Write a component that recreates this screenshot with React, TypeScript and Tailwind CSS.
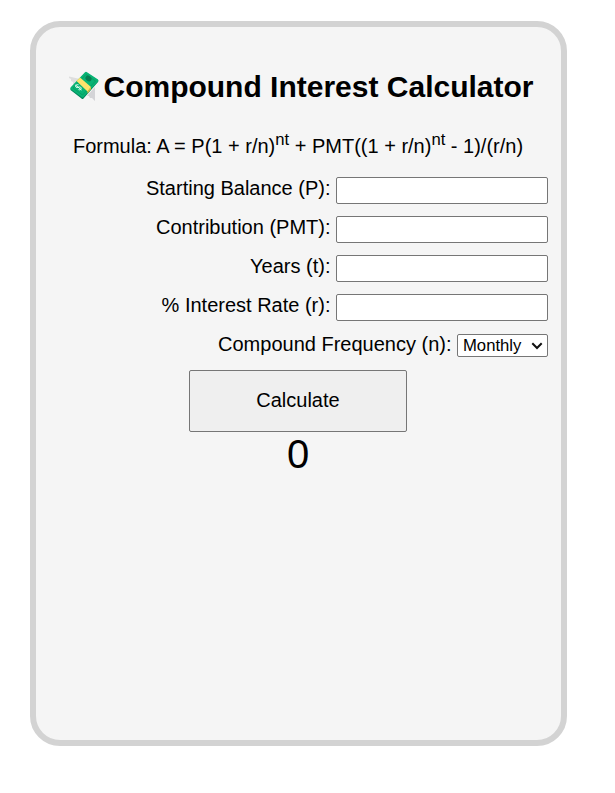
import { useState } from "react";

const field =
  "h-[27px] w-[212px] rounded-[2px] border border-[#767676] bg-white px-1 text-[16px] outline-none";

function MoneyWings() {
  return (
    <svg viewBox="0 0 30 30" className="mr-[4px] mb-[2px] h-[30px] w-[30px] shrink-0" aria-hidden="true">
      <path d="M0 5.500l11 2.500-5 6-2-1 0-2-2-1 0-2-2-1z" fill="#dedede" />
      <path d="M18 25l8-9 0 14-3-3-2 0-1-2z" fill="#d4d4d7" />
      <path d="M1.500 17.500L16 2q1-1 2 0L29 9q.8 1 0 2L14.500 27.500q-1 1-2 0L1.500 19z" fill="#00875a" />
      <path d="M1.500 16.500L16 1.200q1-1 2 0L29 8.500q.8 1 0 2L14.500 26q-1 1-2 0L1.500 18z" fill="#08b374" />
      <path d="M4 17L17 3.500 26.500 10 13.500 24z" fill="none" stroke="#07965e" strokeWidth=".7" />
      <ellipse cx="19.500" cy="7.500" rx="3.300" ry="2.500" fill="#087e51" transform="rotate(40 19.500 7.500)" />
      <path d="M7.500 10L11 6.500 22 16l-3.500 4.500z" fill="#ffe36c" />
      <path d="M18.500 20.500L22 16v2l-3.500 4.500z" fill="#f3bb36" />
      <path d="M9.500 13.800c-2.500-.5-4 1-2.500 2.300s3-1 4.500 0 .5 3.500-2 2.500M6.500 14l6 5" fill="none" stroke="#e5fff2" strokeWidth="1" />
    </svg>
  );
}

function Field({ label }: { label: string }) {
  return (
    <label className="flex h-[39px] items-start justify-end gap-[5.500px]">
      <span className="leading-[23px]">{label}</span>
      <input className={field} />
    </label>
  );
}

export default function App() {
  const [frequency, setFrequency] = useState("Monthly");
  return (
    <main className="h-[793px] bg-white pt-[21px] pl-[30px] font-['Liberation_Sans',Arial,sans-serif] text-[20px] text-black">
      <section className="h-[725px] w-[537px] rounded-[30px] border-[6px] border-[#d3d3d3] bg-[#f5f5f5] px-[13px] pt-[43px]">
        <h1 className="flex h-[34px] items-center justify-center pl-[6px] text-[30px] leading-[34px] font-bold whitespace-nowrap">
          <MoneyWings />
          <span>Compound Interest Calculator</span>
        </h1>
        <p className="mt-[24px] h-[40px] pt-[7px] pr-px text-center leading-[23px] whitespace-nowrap">
          Formula: A = P(1 + r/n)<sup className="text-[16.667px]">nt</sup> + PMT((1 + r/n)
          <sup className="text-[16.667px]">nt</sup> - 1)/(r/n)
        </p>
        <form className="mt-[9px]" onSubmit={(e) => e.preventDefault()}>
          <Field label="Starting Balance (P):" />
          <Field label="Contribution (PMT):" />
          <Field label="Years (t):" />
          <Field label="% Interest Rate (r):" />
          <label className="flex h-[37px] items-start justify-end gap-[5.500px]">
            <span className="leading-[23px]">Compound Frequency (n):</span>
            <span className="relative mt-px block h-[23px] w-[91px]">
              <select
                value={frequency}
                onChange={(e) => setFrequency(e.target.value)}
                className="block h-[23px] w-[91px] appearance-none rounded-[2px] border border-[#767676] bg-white pl-[5px] text-[16.667px] leading-[21px]"
              >
                <option>Monthly</option>
                <option>Yearly</option>
              </select>
              <svg
                viewBox="0 0 12 8"
                className="pointer-events-none absolute top-[8px] right-[5px] h-[8px] w-[12px]"
                aria-hidden="true"
              >
                <path d="M1.300 1.300L6 6l4.700-4.700" fill="none" stroke="#101010" strokeWidth="2" />
              </svg>
            </span>
          </label>
          <div className="flex justify-center pr-px">
            <button className="h-[62px] w-[218px] rounded-[2px] border border-[#767676] bg-[#efefef] pb-[2px]">
              Calculate
            </button>
          </div>
        </form>
        <output className="block pr-px text-center text-[40px] leading-[45px]">0</output>
      </section>
    </main>
  );
}
